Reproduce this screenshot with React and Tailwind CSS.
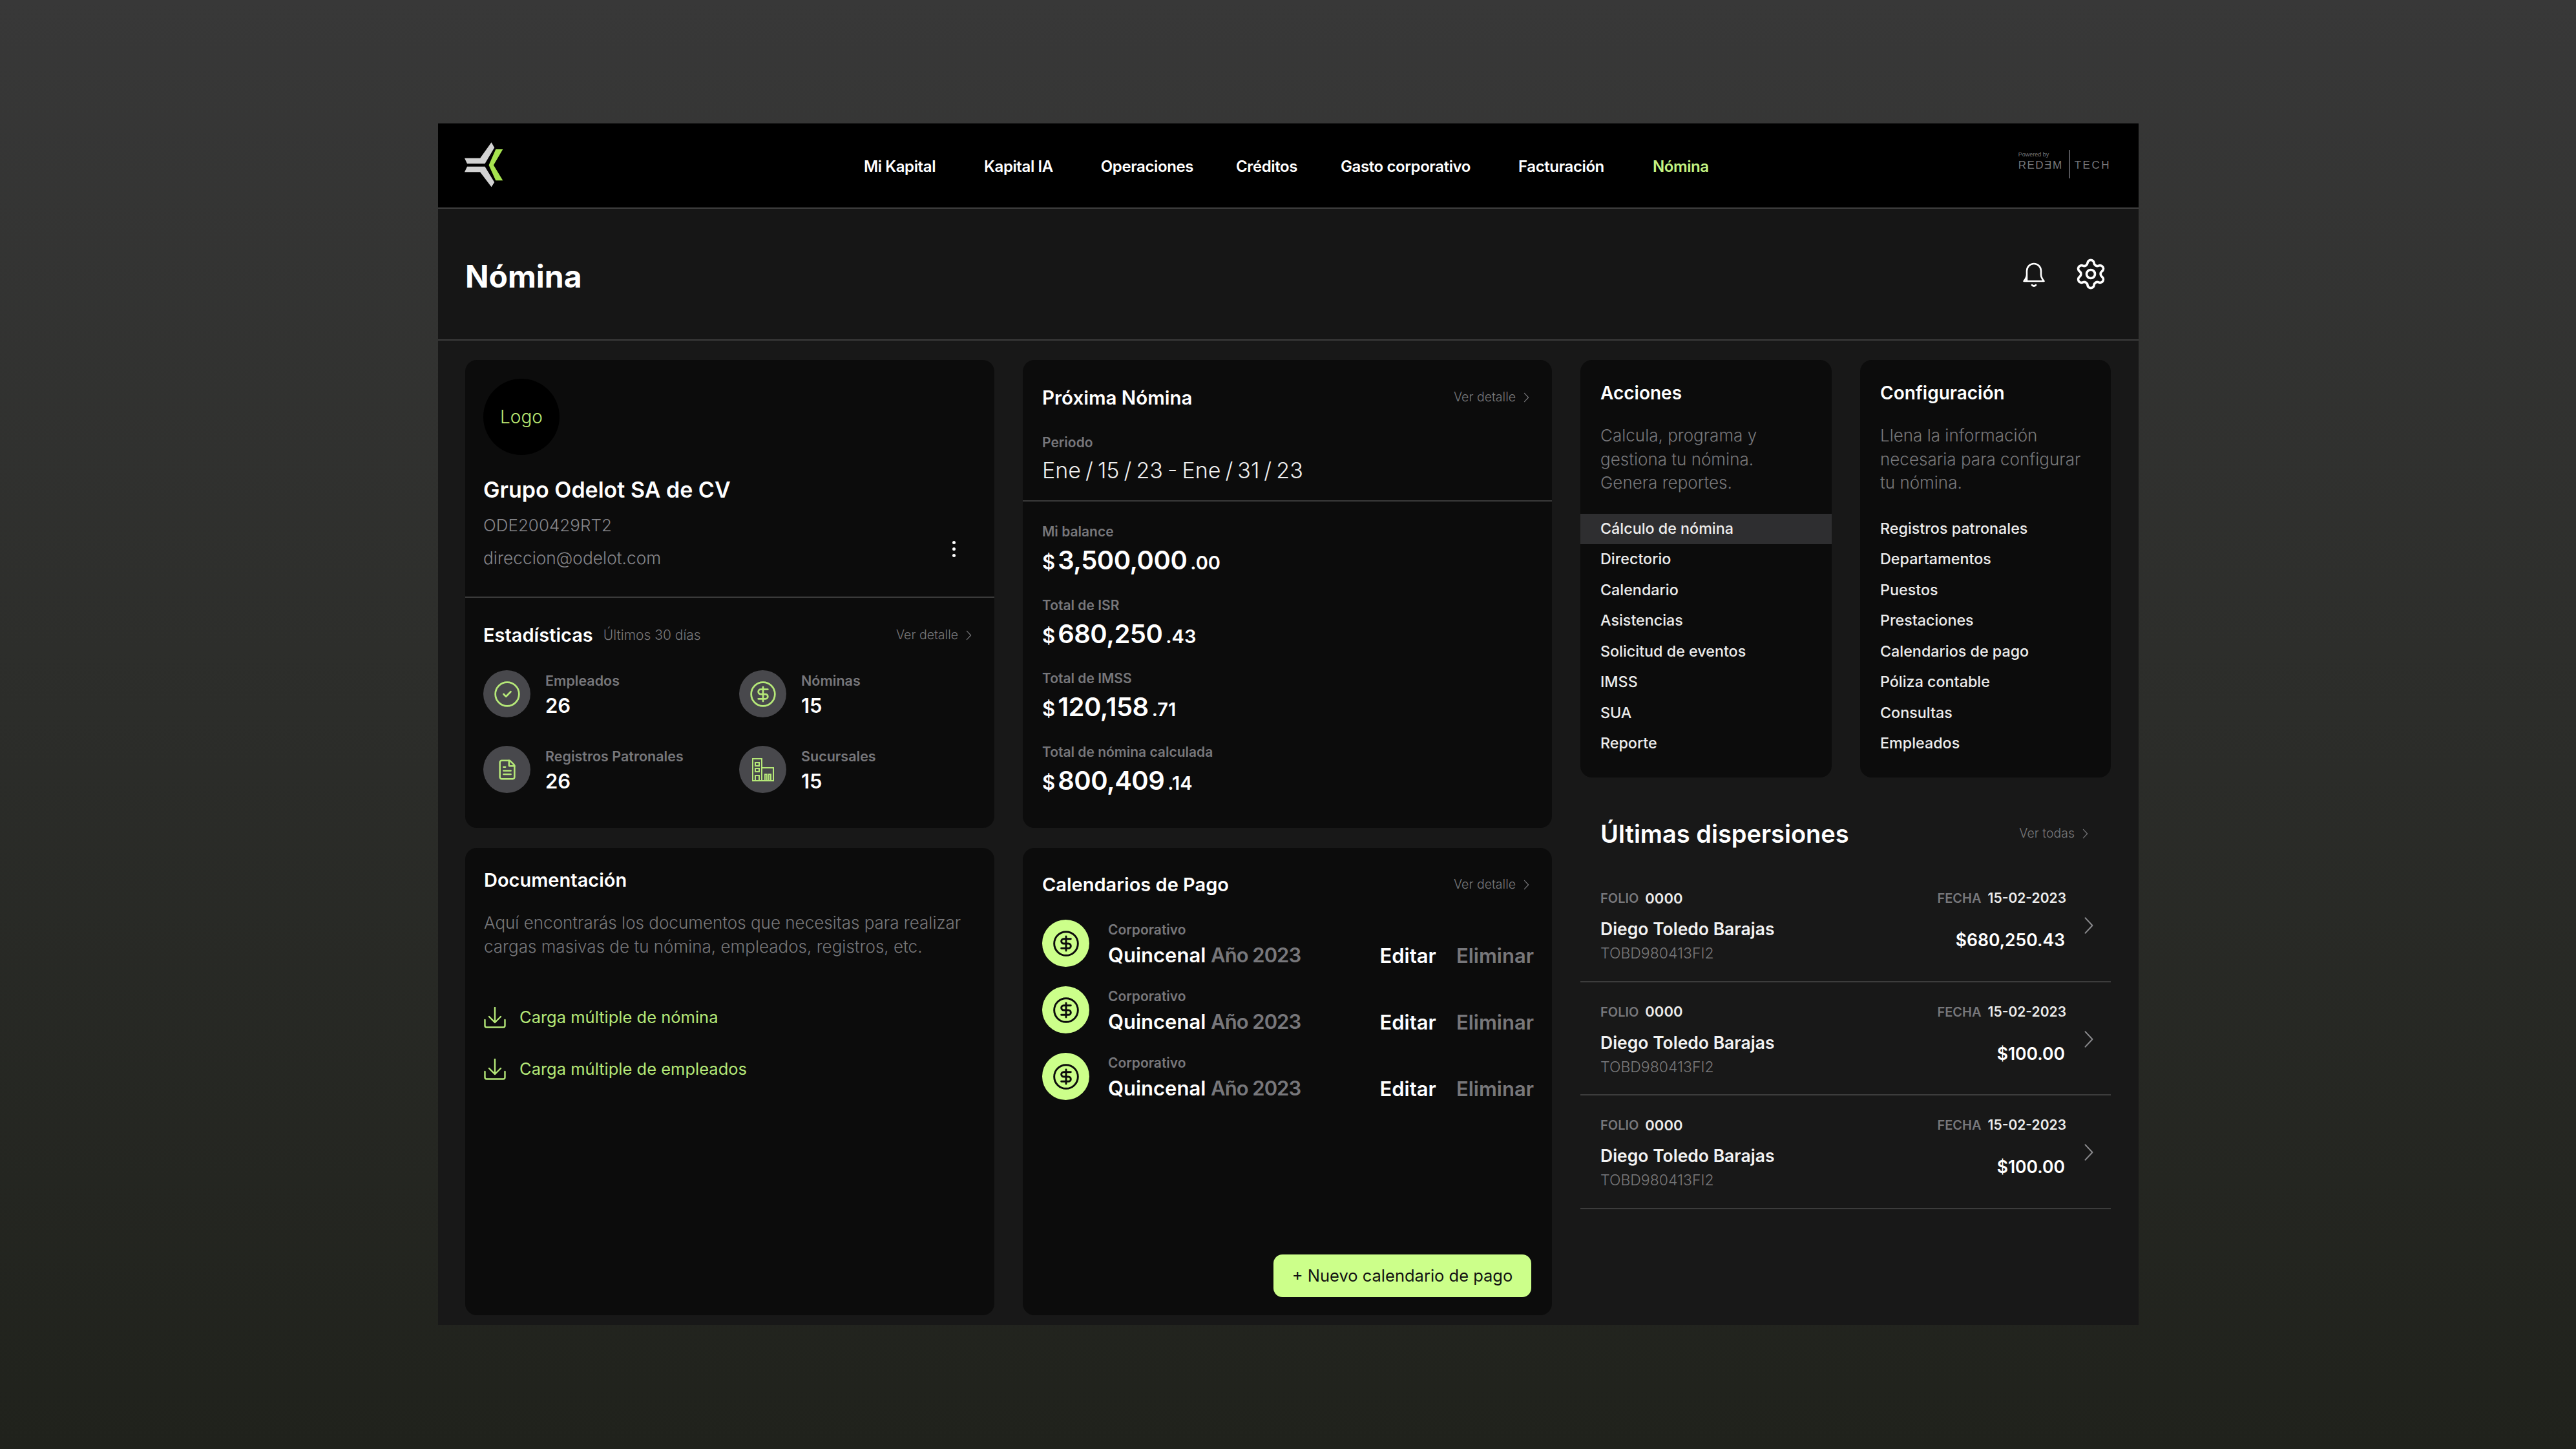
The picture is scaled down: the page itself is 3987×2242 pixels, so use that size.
import React from 'react';
import { CircleCheck, CircleDollarSign, FileText, Settings } from 'lucide-react';

const nav = [
  { label: 'Mi Kapital', cls: '' },
  { label: 'Kapital IA', cls: 'ml-[75px]' },
  { label: 'Operaciones', cls: 'ml-[74px]' },
  { label: 'Créditos', cls: 'ml-[66px]' },
  { label: 'Gasto corporativo', cls: 'ml-[67px]' },
  { label: 'Facturación', cls: 'ml-[74px]' },
  { label: 'Nómina', cls: 'ml-[75px] text-[#c4f483]' },
];

const amounts = [
  { label: 'Mi balance', value: '3,500,000', cents: '.00' },
  { label: 'Total de ISR', value: '680,250', cents: '.43' },
  { label: 'Total de IMSS', value: '120,158', cents: '.71' },
  { label: 'Total de nómina calculada', value: '800,409', cents: '.14' },
];

const acciones = ['Cálculo de nómina', 'Directorio', 'Calendario', 'Asistencias', 'Solicitud de eventos', 'IMSS', 'SUA', 'Reporte'];
const config = ['Registros patronales', 'Departamentos', 'Puestos', 'Prestaciones', 'Calendarios de pago', 'Póliza contable', 'Consultas', 'Empleados'];
const dispersiones = ['$680,250.43', '$100.00', '$100.00'];

function Logo() {
  return (
    <svg viewBox="85 88 185 212" className="w-[62px] h-[71px]">
      <polygon points="88,165 160,165 212,92 226,116 182,190 100,190" fill="#d2d2d2" />
      <polygon points="100,204 182,204 226,276 212,298 160,229 88,229" fill="#d2d2d2" />
      <polygon points="232,124 265,124 222,197 265,268 232,268 200,197" fill="#a6e34f" />
    </svg>
  );
}

function Bell() {
  return (
    <svg viewBox="0 0 34 39" className="w-[34px] h-[39px]" fill="none" stroke="#fff" strokeWidth="2.6" strokeLinejoin="round" strokeLinecap="round">
      <path d="M6 30V14a11 11 0 0 1 22 0v6c0 4 2 7 4.500 10H1.500C4 27 6 24 6 20" />
      <path d="M14 36q3 3 6 0" />
    </svg>
  );
}

function Building() {
  return (
    <svg viewBox="0 0 34 36" className="w-[34px] h-[36px]" fill="none" stroke="#b5e878" strokeWidth="2">
      <path d="M1 35V1h14v34zM15 15h18v20H15z" />
      <path d="M5 7h6v5H5zM5 16h6v5H5zM5 35v-8h6v8M20 35v-10h3v10M26 35v-10h3v10" />
    </svg>
  );
}

function Download() {
  return (
    <svg viewBox="0 0 34 33" className="w-[34px] h-[33px]" fill="none" stroke="#b5e878" strokeWidth="2.4" strokeLinecap="round" strokeLinejoin="round">
      <path d="M17 1v23M8 15l9 9 9-9" />
      <path d="M1.500 20v9a2.500 2.500 0 0 0 2.500 2.500h26a2.500 2.500 0 0 0 2.500-2.500v-9" />
    </svg>
  );
}

function Chevron({ className }) {
  return (
    <svg viewBox="0 0 10 18" className={className} fill="none" stroke="currentColor" strokeWidth="1.300" strokeLinecap="round" strokeLinejoin="round">
      <path d="M1.500 1.500L8.500 9L1.500 16.500" />
    </svg>
  );
}

function VerLink({ label = 'Ver detalle' }) {
  return (
    <div className="flex items-center gap-[12px] text-[19.500px] font-light text-[#77777a]">
      <span>{label}</span>
      <Chevron className="w-[9px] h-[16px]" />
    </div>
  );
}

function Stat({ icon, label, value }) {
  return (
    <div className="flex items-center h-[73px]">
      <div className="w-[73px] h-[73px] rounded-full bg-[#48484c] flex items-center justify-center shrink-0">
        {icon}
      </div>
      <div className="ml-[23px] pt-[5px]">
        <div className="text-[21.500px] leading-[26px] font-semibold text-[#77777b]">{label}</div>
        <div className="text-[31px] leading-[40px] mt-[6px] font-semibold text-white">{value}</div>
      </div>
    </div>
  );
}

function ListCard({ title, lines, items, active }) {
  return (
    <div className="bg-[#0c0c0c] rounded-[18px] h-[646px] pt-[33px]">
      <h3 className="px-[31px] text-[28px] leading-[36px] font-semibold text-white">{title}</h3>
      <div className="px-[31px] mt-[30px] text-[26px] leading-[36.500px] font-light text-[#77777a]">
        {lines.map((line) => (
          <div key={line} className="whitespace-nowrap">{line}</div>
        ))}
      </div>
      <div className="mt-[29px]">
        {items.map((item) => (
          <div
            key={item}
            className={`h-[47.500px] px-[31px] flex items-center text-[23.300px] font-medium text-[#ececec] ${item === active ? 'bg-[#2e2e30]' : ''}`}
          >
            {item}
          </div>
        ))}
      </div>
    </div>
  );
}

export default function App() {
  return (
    <div className="min-h-[2242px] w-full pt-[191px] bg-gradient-to-b from-[#383838] to-[#20221c] font-['Inter',sans-serif]">
      <div className="w-[2632px] h-[1859px] ml-[678px] bg-[#181818] text-white overflow-hidden">
        {/* top nav */}
        <header className="h-[132px] bg-black border-b-2 border-[#3f3f3f] flex items-center">
          <div className="ml-[40px] -mt-[3px]"><Logo /></div>
          <nav className="ml-[557px] mt-[3px] flex text-[24px] font-semibold tracking-[-0.400px] whitespace-nowrap text-white">
            {nav.map((item) => (
              <span key={item.label} className={item.cls}>{item.label}</span>
            ))}
          </nav>
          <div className="ml-auto mr-[43px] flex items-center -mt-[4px] text-[#77777a] font-['Liberation_Sans',sans-serif]">
            <div className="w-[78px]">
              <div className="text-[9px] leading-[10px] -mt-[6px]">Powered by</div>
              <div className="text-[17px] leading-[24px] tracking-[1.500px] whitespace-nowrap">REDƎM</div>
            </div>
            <div className="w-[2px] h-[44px] bg-[#55555a] mr-[7px]" />
            <div className="text-[17px] leading-[24px] tracking-[2.500px] mt-[4px]">TECH</div>
          </div>
        </header>

        {/* page title */}
        <div className="h-[204px] bg-[#161616] border-b-2 border-[#3c3c3c] flex items-center pl-[42px] pr-[52px]">
          <h1 className="text-[48px] font-bold text-white mt-[8px]">Nómina</h1>
          <div className="ml-auto flex items-center gap-[49px] text-white">
            <Bell />
            <Settings size={52} strokeWidth={1.700} className="-m-[4px]" />
          </div>
        </div>

        {/* main grid */}
        <div className="grid grid-cols-[819px_819px_821px] gap-x-[44px] pl-[42px] pt-[30px]">
          <div className="flex flex-col gap-[31px]">
            <section className="bg-[#0c0c0c] rounded-[18px] h-[724px] flex flex-col">
              <div className="h-[368px] border-b-2 border-[#3a3a3a] px-[28px] pt-[29px] relative">
                <div className="w-[118px] h-[118px] rounded-full bg-black flex items-center justify-center text-[28px] font-light text-[#bdea74]">Logo</div>
                <div className="mt-[32px] text-[34px] leading-[44px] font-semibold text-white">Grupo Odelot SA de CV</div>
                <div className="mt-[11px] text-[26px] leading-[43px] font-light text-[#85858a]">ODE200429RT2</div>
                <div className="mt-[8px] text-[26.300px] leading-[43px] font-light text-[#85858a]">direccion@odelot.com</div>
                <div className="absolute right-[60px] top-[280px] flex flex-col gap-[5px]">
                  <i className="block w-[5px] h-[5px] rounded-full bg-white" />
                  <i className="block w-[5px] h-[5px] rounded-full bg-white" />
                  <i className="block w-[5px] h-[5px] rounded-full bg-white" />
                </div>
              </div>
              <div className="px-[28px] pt-[40px]">
                <div className="flex items-center h-[36px] pr-[7px]">
                  <h3 className="text-[29px] font-semibold text-white">Estadísticas</h3>
                  <span className="ml-[16px] text-[21px] font-light text-[#77777a]">Últimos 30 días</span>
                  <div className="ml-auto"><VerLink /></div>
                </div>
                <div className="grid grid-cols-[396px_1fr] gap-y-[44px] mt-[36px]">
                  <Stat icon={<CircleCheck size={44} strokeWidth={1.500} color="#b5e878" />} label="Empleados" value="26" />
                  <Stat icon={<CircleDollarSign size={44} strokeWidth={1.500} color="#b5e878" />} label="Nóminas" value="15" />
                  <Stat icon={<FileText size={34} strokeWidth={1.800} color="#b5e878" />} label="Registros Patronales" value="26" />
                  <Stat icon={<Building />} label="Sucursales" value="15" />
                </div>
              </div>
            </section>

            <section className="bg-[#0c0c0c] rounded-[18px] h-[723px] px-[29px] pt-[32px]">
              <h3 className="text-[29px] leading-[36px] font-semibold text-white">Documentación</h3>
              <p className="mt-[29px] text-[26px] leading-[37px] font-light text-[#77777a] whitespace-nowrap">
                Aquí encontrarás los documentos que necesitas para realizar<br />cargas masivas de tu nómina, empleados, registros, etc.
              </p>
              <div className="mt-[75px] flex flex-col gap-[47px]">
                {['Carga múltiple de nómina', 'Carga múltiple de empleados'].map((text) => (
                  <div key={text} className="flex items-center h-[33px] gap-[21px] text-[25.500px] text-[#b5e878]">
                    <Download />
                    <span>{text}</span>
                  </div>
                ))}
              </div>
            </section>
          </div>

          <div className="flex flex-col gap-[31px]">
            <section className="bg-[#0c0c0c] rounded-[18px] h-[724px] flex flex-col">
              <div className="h-[219px] border-b-2 border-[#3a3a3a] px-[30px] pt-[40px]">
                <div className="flex items-center justify-between h-[36px] pr-[5px]">
                  <h3 className="text-[29.500px] font-semibold text-white">Próxima Nómina</h3>
                  <VerLink />
                </div>
                <div className="mt-[39px] text-[21px] leading-[26px] font-semibold text-[#77777b]">Periodo</div>
                <div className="mt-[7px] text-[34px] leading-[46px] font-light text-[#f0f0f0] [word-spacing:-2.500px]">Ene / 15 / 23 - Ene / 31 / 23</div>
              </div>
              <div className="px-[30px] pt-[34px] flex flex-col gap-[32.500px]">
                {amounts.map((row) => (
                  <div key={row.label}>
                    <div className="text-[21px] leading-[26px] font-semibold text-[#77777b]">{row.label}</div>
                    <div className="mt-[1px] h-[54px] flex items-baseline font-semibold text-white">
                      <span className="text-[31px] mr-[4px]">$</span>
                      <span className="text-[40px] tracking-[-0.500px]">{row.value}</span>
                      <span className="text-[29px] ml-[5px]">{row.cents}</span>
                    </div>
                  </div>
                ))}
              </div>
            </section>

            <section className="bg-[#0c0c0c] rounded-[18px] h-[723px] px-[30px] pt-[39px] flex flex-col">
              <div className="flex items-center justify-between h-[36px] pr-[5px]">
                <h3 className="text-[29px] font-semibold text-white">Calendarios de Pago</h3>
                <VerLink />
              </div>
              <div className="mt-[36px] flex flex-col gap-[30px]">
                {[0, 1, 2].map((i) => (
                  <div key={i} className="flex items-center h-[73px]">
                    <div className="w-[73px] h-[73px] rounded-full bg-[#ccff8a] flex items-center justify-center shrink-0">
                      <CircleDollarSign size={44} strokeWidth={1.600} color="#0c0c0c" />
                    </div>
                    <div className="ml-[29px] pt-[5px]">
                      <div className="text-[21px] leading-[26px] font-semibold text-[#77777b]">Corporativo</div>
                      <div className="mt-[6px] text-[31px] leading-[40px] font-semibold whitespace-nowrap">
                        Quincenal <span className="text-[#77777b] tracking-[-1px]">Año 2023</span>
                      </div>
                    </div>
                    <div className="ml-auto self-end flex gap-[31px] text-[31px] leading-[40px] font-semibold -mr-[2px] -mb-[3px]">
                      <span className="text-white">Editar</span>
                      <span className="text-[#77777b]">Eliminar</span>
                    </div>
                  </div>
                ))}
              </div>
              <div className="mt-auto mb-[28px] self-end mr-[2px] w-[399px] h-[66px] rounded-[14px] bg-[#ccff8a] flex items-center justify-center text-[25.500px] text-[#121212]">
                + Nuevo calendario de pago
              </div>
            </section>
          </div>

          <div>
            <div className="grid grid-cols-[389px_388px] gap-x-[44px]">
              <ListCard title="Acciones" lines={['Calcula, programa y', 'gestiona tu nómina.', 'Genera reportes.']} items={acciones} active="Cálculo de nómina" />
              <ListCard title="Configuración" lines={['Llena la información', 'necesaria para configurar', 'tu nómina.']} items={config} />
            </div>
            <section className="mt-[59px]">
              <div className="flex items-center justify-between h-[56px] pl-[31px] pr-[35px] mb-[26px]">
                <h2 className="text-[38px] font-semibold text-white">Últimas dispersiones</h2>
                <VerLink label="Ver todas" />
              </div>
              {dispersiones.map((amount, i) => (
                <div key={i} className="h-[175.500px] border-b-2 border-[#3c3c3c] pl-[31px] pr-[26px] pt-[31px] flex">
                  <div className="flex-1">
                    <div className="h-[30px] flex items-center justify-between">
                      <div className="flex items-center gap-[10px]">
                        <span className="text-[20px] font-semibold text-[#77777b]">FOLIO</span>
                        <span className="text-[22px] font-semibold text-[#ececec]">0000</span>
                      </div>
                      <div className="flex items-center gap-[10px]">
                        <span className="text-[20px] font-semibold text-[#77777b]">FECHA</span>
                        <span className="text-[21px] font-semibold text-[#ececec]">15-02-2023</span>
                      </div>
                    </div>
                    <div className="flex justify-between mt-[14px]">
                      <div>
                        <div className="text-[26.500px] leading-[36px] font-semibold text-[#f2f2f2]">Diego Toledo Barajas</div>
                        <div className="mt-[4px] text-[23px] leading-[32px] font-light text-[#77777a]">TOBD980413FI2</div>
                      </div>
                      <div className="text-[26.500px] font-semibold text-white mt-[16px] mr-[2px]">{amount}</div>
                    </div>
                  </div>
                  <Chevron className="w-[16px] h-[28px] text-[#8a8a8d] ml-[27px] mt-[43px] shrink-0" />
                </div>
              ))}
            </section>
          </div>
        </div>
      </div>
    </div>
  );
}
